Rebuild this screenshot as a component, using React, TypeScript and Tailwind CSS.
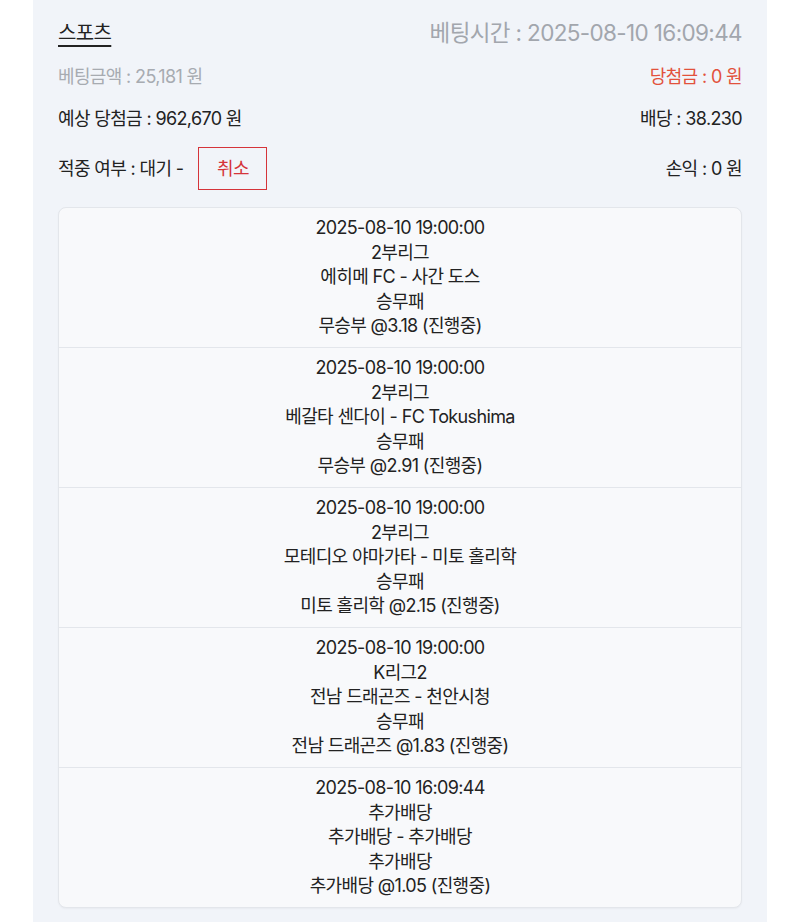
const bets = [
  {
    time: '2025-08-10 19:00:00',
    league: '2부리그',
    match: '에히메 FC - 사간 도스',
    market: '승무패',
    pick: '무승부 @3.18 (진행중)',
  },
  {
    time: '2025-08-10 19:00:00',
    league: '2부리그',
    match: '베갈타 센다이 - FC Tokushima',
    market: '승무패',
    pick: '무승부 @2.91 (진행중)',
  },
  {
    time: '2025-08-10 19:00:00',
    league: '2부리그',
    match: '모테디오 야마가타 - 미토 홀리학',
    market: '승무패',
    pick: '미토 홀리학 @2.15 (진행중)',
  },
  {
    time: '2025-08-10 19:00:00',
    league: 'K리그2',
    match: '전남 드래곤즈 - 천안시청',
    market: '승무패',
    pick: '전남 드래곤즈 @1.83 (진행중)',
  },
  {
    time: '2025-08-10 16:09:44',
    league: '추가배당',
    match: '추가배당 - 추가배당',
    market: '추가배당',
    pick: '추가배당 @1.05 (진행중)',
  },
];

export default function App() {
  return (
    <div
      className="min-h-[922px] bg-white"
      style={{ fontFamily: 'Inter, "Noto Sans CJK KR", sans-serif' }}
    >
      <div className="mx-[33px] min-h-[922px] bg-[#f1f4f9] px-[25px] pt-[18px] tracking-[-0.04em] text-[#222]">
        {/* header row */}
        <div className="flex h-[30px] items-center justify-between">
          <span className="text-[20px] underline underline-offset-[5px]">스포츠</span>
          <span className="text-[22.5px] text-[#a2a6ad]">베팅시간 : 2025-08-10 16:09:44</span>
        </div>

        <div className="mt-[15px] flex h-[26px] items-center justify-between text-[18px]">
          <span className="text-[#a7abb1]">베팅금액 : 25,181 원</span>
          <span className="text-[#e2513c]">당첨금 : 0 원</span>
        </div>

        <div className="mt-[16px] flex h-[26px] items-center justify-between text-[18px]">
          <span>예상 당첨금 : 962,670 원</span>
          <span>배당 : 38.230</span>
        </div>

        <div className="mt-[16px] flex h-[43px] items-center justify-between text-[18px]">
          <div className="flex items-center">
            <span>적중 여부 : 대기 -</span>
            <button className="ml-[15px] flex h-[43px] w-[69px] items-center justify-center border-[1.5px] border-[#d5343a] text-[18px] text-[#d5343a]">
              취소
            </button>
          </div>
          <span>손익 : 0 원</span>
        </div>

        {/* bet list */}
        <div className="mt-[17px] overflow-hidden rounded-lg border border-[#e3e6eb] bg-[#f8f9fb] shadow-[0_1px_2px_rgba(0,0,0,0.04)]">
          {bets.map((b, i) => (
            <div
              key={i}
              className={`flex flex-col items-center justify-center text-center text-[18px] leading-[24.5px] ${
                i > 0 ? 'h-[140px] border-t border-[#e3e6eb]' : 'h-[139px]'
              }`}
            >
              <div>{b.time}</div>
              <div>{b.league}</div>
              <div>{b.match}</div>
              <div>{b.market}</div>
              <div>{b.pick}</div>
            </div>
          ))}
        </div>
      </div>
    </div>
  );
}
